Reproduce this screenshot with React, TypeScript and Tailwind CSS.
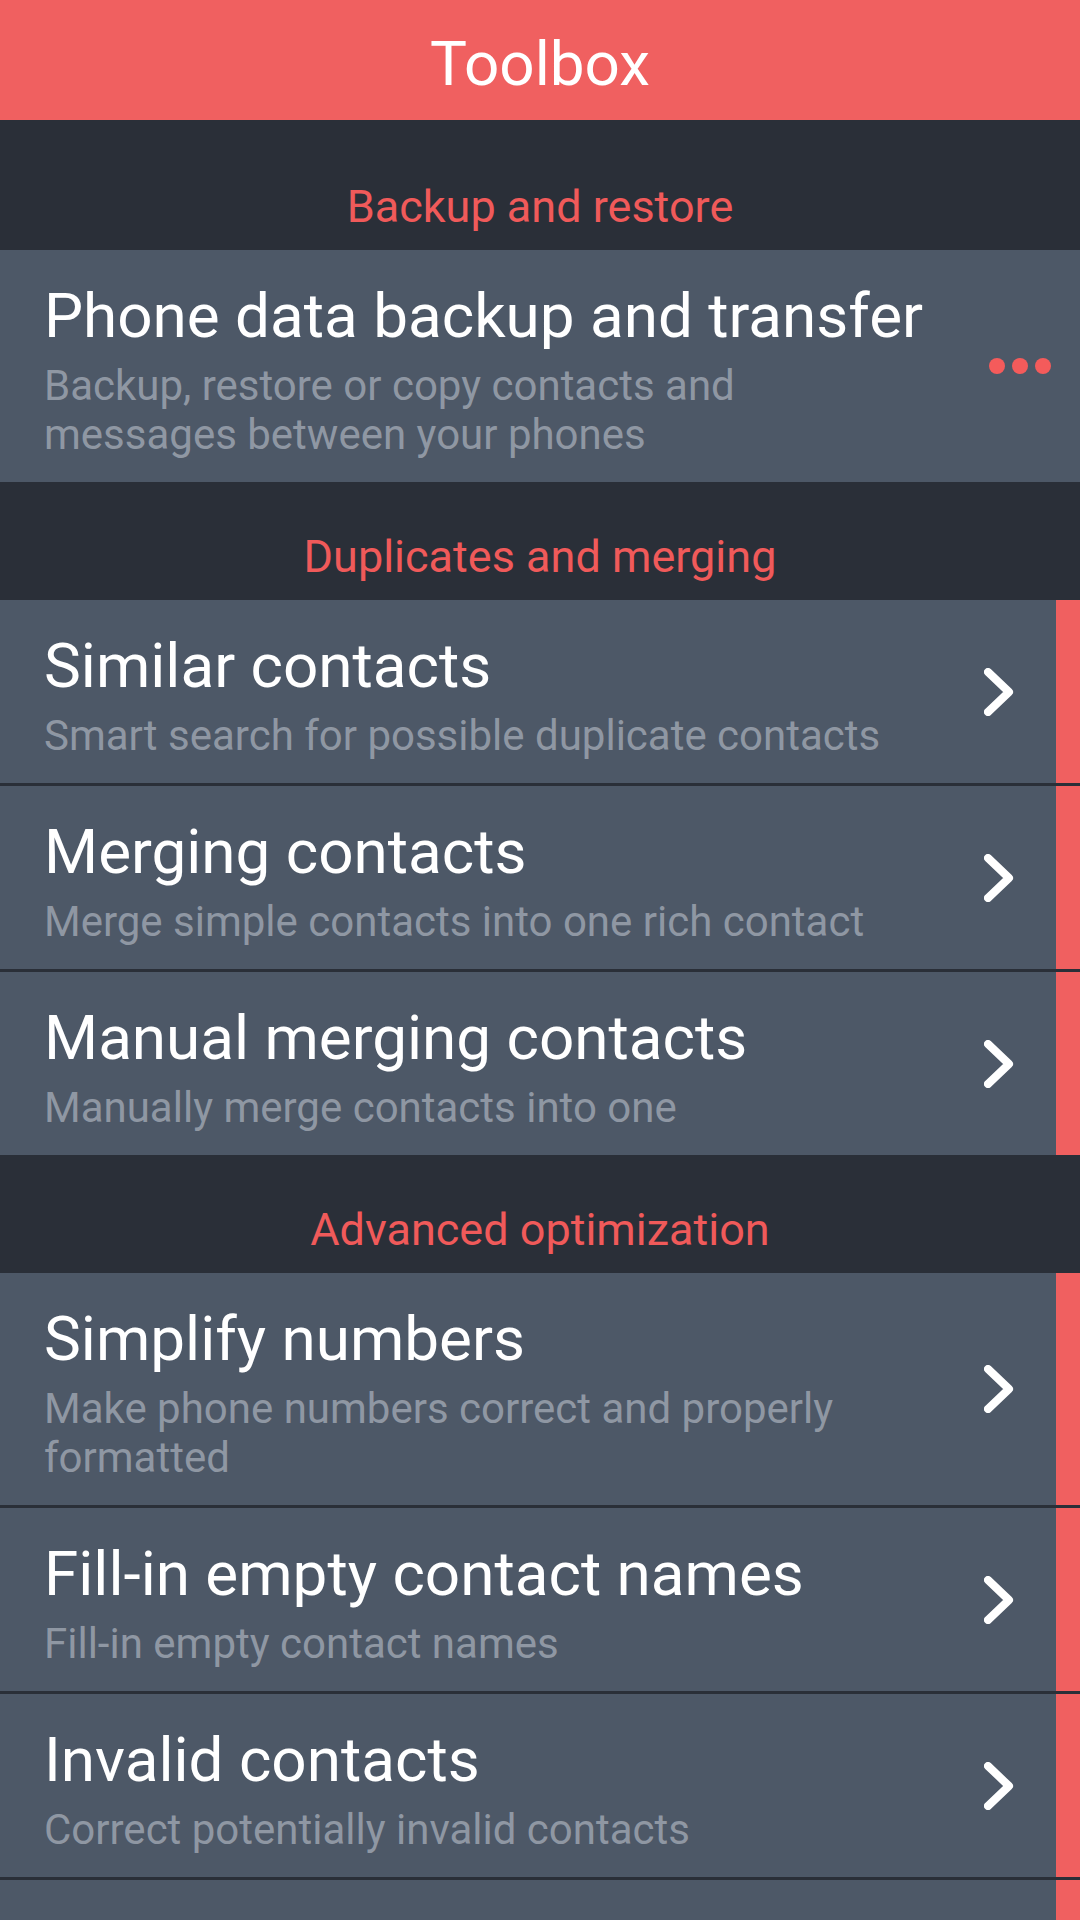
const sections = [
  {
    title: "Backup and restore",
    first: true,
    items: [
      {
        title: "Phone data backup and transfer",
        desc: "Backup, restore or copy contacts and messages between your phones",
        more: true,
      },
    ],
  },
  {
    title: "Duplicates and merging",
    items: [
      { title: "Similar contacts", desc: "Smart search for possible duplicate contacts" },
      { title: "Merging contacts", desc: "Merge simple contacts into one rich contact" },
      { title: "Manual merging contacts", desc: "Manually merge contacts into one" },
    ],
  },
  {
    title: "Advanced optimization",
    filler: true,
    items: [
      { title: "Simplify numbers", desc: "Make phone numbers correct and properly formatted" },
      { title: "Fill-in empty contact names", desc: "Fill-in empty contact names" },
      { title: "Invalid contacts", desc: "Correct potentially invalid contacts" },
    ],
  },
]

function Chevron() {
  return (
    <svg width="30" height="48" viewBox="0 0 30 48" fill="none">
      <polyline
        points="4,4 25,24 4,44"
        stroke="white"
        strokeWidth="8"
        strokeLinecap="round"
        strokeLinejoin="round"
      />
    </svg>
  )
}

function Row({ item }: { item: { title: string; desc: string; more?: boolean } }) {
  return (
    <div className="flex bg-[#4d5867]">
      <div className="flex-1 min-w-0 pl-[44px] pt-[29px] pb-[23px]">
        <p className="text-[62px] leading-[74px] text-white whitespace-nowrap">{item.title}</p>
        <p className="mt-[8px] text-[42px] leading-[49px] text-[#8f97a3]">{item.desc}</p>
      </div>
      {item.more ? (
        <div className="w-[152px] flex items-center justify-end pr-[29px] gap-[7px]">
          <span className="h-4 w-4 rounded-full bg-[#f45b5b]" />
          <span className="h-4 w-4 rounded-full bg-[#f45b5b]" />
          <span className="h-4 w-4 rounded-full bg-[#f45b5b]" />
        </div>
      ) : (
        <>
          <div className="w-[128px] flex items-center justify-end pr-[42px]">
            <Chevron />
          </div>
          <div className="w-[24px] bg-[#f06060]" />
        </>
      )}
    </div>
  )
}

export default function App() {
  return (
    <div
      className="h-[1920px] overflow-hidden flex flex-col bg-[#2a2f38]"
      style={{ fontFamily: "Roboto, 'Noto Sans', sans-serif" }}
    >
      {/* HEADER */}
      <div className="h-[120px] shrink-0 bg-[#f06060] flex items-center justify-center pt-2">
        <h1 className="text-[62px] leading-[74px] text-white">Toolbox</h1>
      </div>

      {sections.map((s, i) => (
        <div key={i} className="flex flex-col">
          <div
            className={`${s.first ? "h-[130px]" : "h-[118px]"} flex items-end justify-center pb-[16px]`}
          >
            <p className="text-[45px] leading-[54px] text-[#f05a5a]">{s.title}</p>
          </div>
          <div className="flex flex-col divide-y-[3px] divide-[#2a2f38]">
            {s.items.map((item, j) => (
              <Row key={j} item={item} />
            ))}
            {s.filler && (
              <div className="flex h-[60px] bg-[#4d5867]">
                <div className="flex-1" />
                <div className="w-[24px] bg-[#f06060]" />
              </div>
            )}
          </div>
        </div>
      ))}
    </div>
  )
}
